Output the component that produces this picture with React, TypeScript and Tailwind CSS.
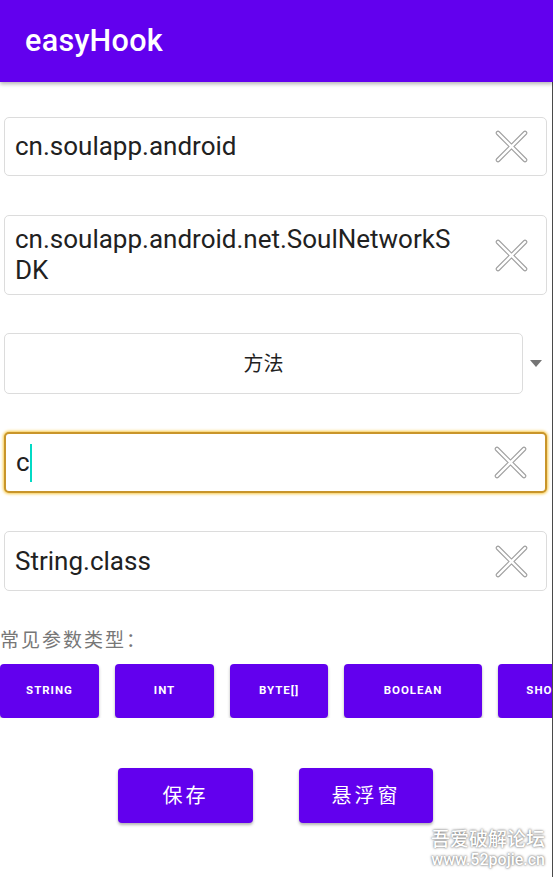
import type { ReactNode } from "react";

const font = { fontFamily: "Roboto, 'Noto Sans CJK SC', sans-serif" };

function ClearIcon() {
  return (
    <svg aria-hidden="true" className="h-[33px] w-[33px] shrink-0" viewBox="0 0 33 33">
      <path d="M3 3 L30 30 M30 3 L3 30" stroke="#a0a0a0" strokeLinecap="round" strokeWidth="4.6" />
      <path d="M3 3 L30 30 M30 3 L3 30" stroke="#ffffff" strokeLinecap="round" strokeWidth="2.4" />
    </svg>
  );
}

function Field({
  children,
  focused = false,
  heightClass,
}: {
  readonly children: ReactNode;
  readonly focused?: boolean;
  readonly heightClass: string;
}) {
  return (
    <div
      className={[
        "ml-[4px] mr-[5px] flex items-center justify-between rounded-[5px] bg-white pl-[10px] pr-[18px]",
        heightClass,
        focused
          ? "border-2 border-[#c9952a] shadow-[0_0_3px_1px_#f7c948]"
          : "border border-[#dcdcdc]",
      ].join(" ")}
    >
      <div className="min-w-0 flex-1 text-[26px] leading-[31px] text-[#212121]">{children}</div>
      <ClearIcon />
    </div>
  );
}

const chips = [
  { label: "STRING", width: "w-[99px]" },
  { label: "INT", width: "w-[99px]" },
  { label: "BYTE[]", width: "w-[98px]" },
  { label: "BOOLEAN", width: "w-[138px]" },
  { label: "SHORT", width: "w-[99px]" },
];

export default function App() {
  return (
    <div className="relative h-[877px] w-[553px] overflow-hidden bg-white" style={font}>
      <header className="relative z-10 flex h-[82px] items-center bg-[#6200ee] pl-[25px] shadow-[0_2px_4px_rgba(0,0,0,0.3)]">
        <h1 className="text-[30.5px] font-medium tracking-[0.3px] text-white">easyHook</h1>
      </header>

      <main className="flex h-[795px] flex-col border-r border-[#4a4a4a]">
        <div className="mt-[35px]">
          <Field heightClass="h-[59px]">cn.soulapp.android</Field>
        </div>
        <div className="mt-[39px]">
          <Field heightClass="h-[80px]">
            <span className="block w-[445px] break-all">cn.soulapp.android.net.SoulNetworkSDK</span>
          </Field>
        </div>

        <div className="mt-[38px] flex items-center">
          <div className="ml-[4px] flex h-[61px] w-[519px] items-center justify-center rounded-[5px] border border-[#dcdcdc] text-[20px] text-[#212121]">
            方法
          </div>
          <div className="ml-[7px] h-0 w-0 border-x-[6px] border-t-[7px] border-x-transparent border-t-[#757575]" />
        </div>

        <div className="mt-[38px]">
          <Field focused heightClass="h-[61px]">
            <span className="flex items-center">
              c<span className="inline-block h-[38px] w-[2px] bg-[#03dac5]" />
            </span>
          </Field>
        </div>

        <div className="mt-[38px]">
          <Field heightClass="h-[60px]">String.class</Field>
        </div>

        <p className="mt-[37px] text-[19px] leading-[26px] tracking-[2px] text-[#777777]">常见参数类型：</p>

        <div className="mt-[10px] flex gap-[16px] overflow-hidden">
          {chips.map((chip) => (
            <button
              className={`${chip.width} flex h-[54px] shrink-0 items-center justify-center rounded-[4px] bg-[#6200ee] text-[11.5px] font-bold tracking-[1px] text-white shadow-[0_2px_3px_rgba(0,0,0,0.3)]`}
              key={chip.label}
              type="button"
            >
              {chip.label}
            </button>
          ))}
        </div>

        <div className="mt-[50px] flex gap-[46px] pl-[118px]">
          <button
            className="flex h-[55px] w-[135px] items-center justify-center rounded-[4px] bg-[#6200ee] text-[20px] tracking-[3px] text-white shadow-[0_2px_3px_rgba(0,0,0,0.3)]"
            type="button"
          >
            保存
          </button>
          <button
            className="flex h-[55px] w-[134px] items-center justify-center rounded-[4px] bg-[#6200ee] text-[20px] tracking-[3px] text-white shadow-[0_2px_3px_rgba(0,0,0,0.3)]"
            type="button"
          >
            悬浮窗
          </button>
        </div>
      </main>

      <div className="absolute bottom-[8px] right-[8px] flex flex-col items-end font-medium text-white [text-shadow:0_0_2px_#777,0_0_3px_#999]">
        <span className="text-[19px] leading-[22px]">吾爱破解论坛</span>
        <span className="text-[16px] leading-[18px]">www.52pojie.cn</span>
      </div>
    </div>
  );
}
